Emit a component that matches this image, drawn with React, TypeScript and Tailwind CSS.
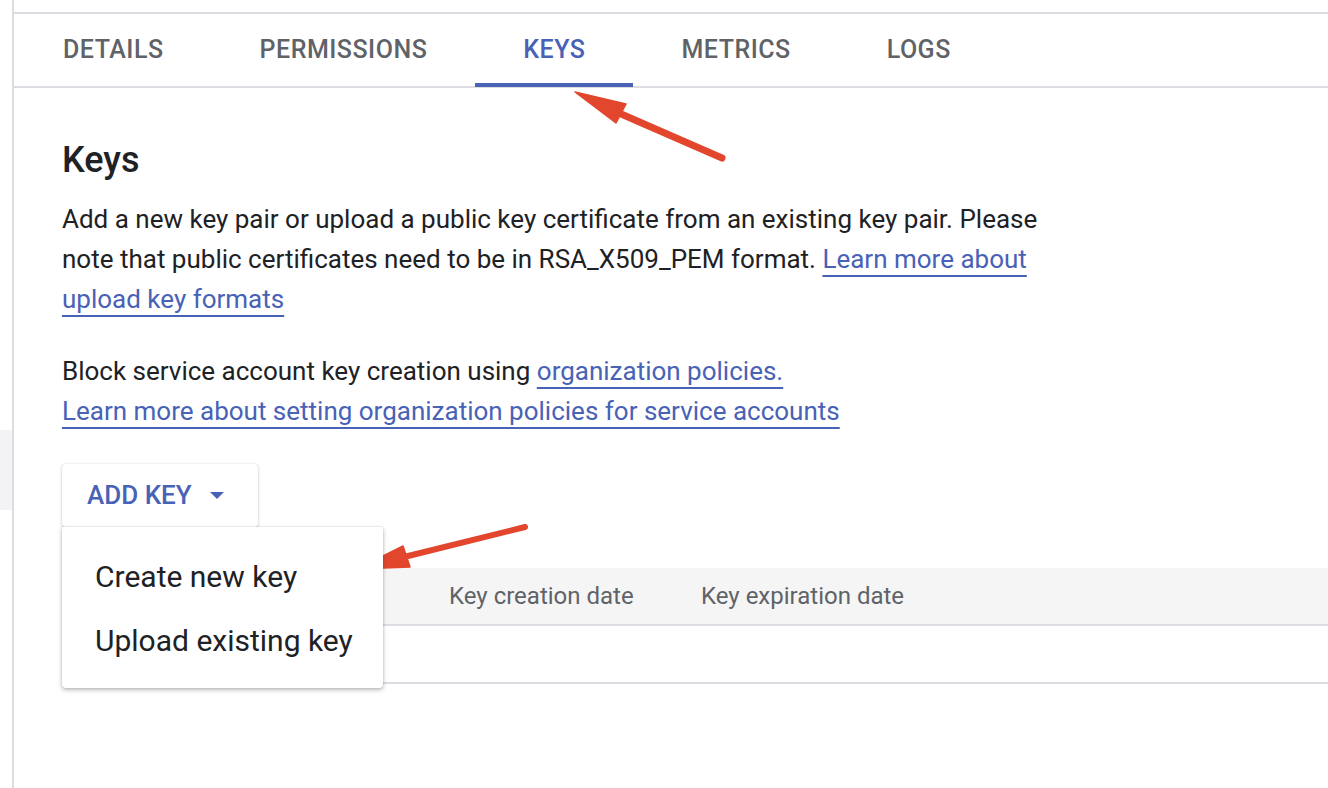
import React from 'react';

const tabs = ['DETAILS', 'PERMISSIONS', 'KEYS', 'METRICS', 'LOGS'];

const linkCls =
  'text-[#4862b6] underline decoration-2 underline-offset-[7px] decoration-[#4862b6]';

function Arrows() {
  // red annotation arrows drawn over the screenshot
  return (
    <svg className="absolute inset-0 pointer-events-none" width="1328" height="788">
      <g fill="#e2462d" stroke="#e2462d" strokeLinecap="round">
        <line x1="722" y1="158" x2="612" y2="110" strokeWidth="7" />
        <polygon points="575,92 626,104 616,123" strokeWidth="1.5" strokeLinejoin="round" />
        <line x1="525" y1="527" x2="400" y2="558" strokeWidth="6" />
        <polygon points="357,569 403,546 410,567" strokeWidth="1.5" strokeLinejoin="round" />
      </g>
    </svg>
  );
}

export default function App() {
  const active = 2;

  return (
    <div className="relative w-[1328px] h-[788px] overflow-hidden bg-white flex font-[Roboto,sans-serif] text-[#202124]">
      {/* left rail */}
      <div className="w-[14px] shrink-0 border-r-2 border-[#dcdce2] flex flex-col">
        <div className="h-[430px]" />
        <div className="h-[80px] bg-[#f3f3f5]" />
      </div>

      <div className="flex-1 flex flex-col">
        {/* tab bar */}
        <div className="mt-[12px] h-[76px] border-t-2 border-b-2 border-[#dcdce2] flex items-stretch">
          {tabs.map((t, i) => (
            <div
              key={t}
              className={
                'relative px-[48px] flex items-center text-[25px] font-medium tracking-[0.02em] ' +
                (i === 0 ? 'pl-[49px] ' : '') +
                (i === active ? 'text-[#4862b6]' : 'text-[#5f6368]')
              }
            >
              {t}
              {i === active && (
                <div className="absolute left-0 right-0 bottom-[-1px] h-[4px] bg-[#4862b6]" />
              )}
            </div>
          ))}
        </div>

        {/* content */}
        <div className="pl-[48px] flex flex-col">
          <h1 className="mt-[52px] text-[36px] leading-[40px] font-medium text-[#202124]">Keys</h1>

          <p className="mt-[19px] w-[1010px] text-[26px] leading-[40px]">
            Add a new key pair or upload a public key certificate from an existing key pair. Please
            note that public certificates need to be in RSA_X509_PEM format.{' '}
            <span className={linkCls}>Learn more about upload key formats</span>
          </p>

          <p className="mt-[32px] text-[26px] leading-[40px]">
            Block service account key creation using{' '}
            <span className={linkCls}>organization policies.</span>
            <br />
            <span className={linkCls}>Learn more about setting organization policies for service accounts</span>
          </p>

          <div className="relative mt-[33px]">
            <button className="h-[63px] w-[196px] pl-[25px] flex items-center gap-[18px] bg-white rounded-[4px] shadow-[0_1px_3px_rgba(60,64,67,0.3),0_0_1px_rgba(60,64,67,0.2)] text-[26px] font-medium text-[#4862b6]">
              ADD KEY
              <svg width="14" height="8" viewBox="0 0 14 8">
                <path d="M0 0h14L7 7z" fill="#4862b6" />
              </svg>
            </button>

            {/* dropdown menu */}
            <div className="absolute left-0 top-[63px] z-10 w-[321px] h-[161px] bg-white rounded-b-[4px] shadow-[0_2px_4px_rgba(60,64,67,0.35),0_0_2px_rgba(60,64,67,0.2)] pt-[17px] text-[30px] text-[#202124]">
              <div className="h-[64px] pl-[33px] flex items-center">Create new key</div>
              <div className="h-[64px] pl-[33px] flex items-center">Upload existing key</div>
            </div>

            {/* keys table */}
            <div className="mt-[41px]">
              <div className="h-[58px] bg-[#f5f5f6] border-b-2 border-[#dcdce2] flex items-center pl-[387px] text-[24px] text-[#5f6368]">
                <div className="w-[252px]">Key creation date</div>
                <div>Key expiration date</div>
              </div>
              <div className="h-[58px] border-b-2 border-[#dcdce2]" />
            </div>
          </div>
        </div>
      </div>

      <Arrows />
    </div>
  );
}
